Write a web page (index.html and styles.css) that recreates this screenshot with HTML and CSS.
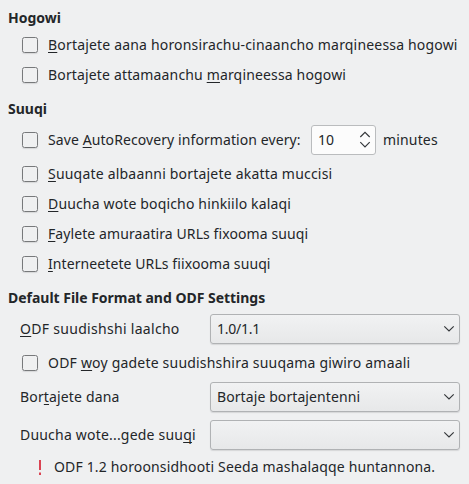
FILE: index.html
```html
<!DOCTYPE html>
<html lang="sid">
<head>
<meta charset="utf-8">
<title>Hogowi</title>
<link rel="stylesheet" href="styles.css">
</head>
<body>
<main class="panel">
  <section class="group">
    <h2>Hogowi</h2>
    <label class="row"><i class="box"></i><span class="text t18"><u>B</u>ortajete aana horonsirachu-cinaancho marqineessa hogowi</span></label>
    <label class="row"><i class="box"></i><span class="text t15">Bortajete attamaanchu <u>m</u>arqineessa hogowi</span></label>
  </section>
  <section class="group">
    <h2>Suuqi</h2>
    <div class="row save">
      <i class="box"></i><span class="text every t10">Save <u>A</u>utoRecovery information every:</span>
      <div class="spin"><span>10</span>
        <svg width="12" height="18" viewBox="0 0 12 18"><path d="M1.3 6 6 1.3 10.7 6M1.3 11.2 6 15.9 10.7 11.2"/></svg>
      </div>
      <span class="text t15">minutes</span>
    </div>
    <label class="row"><i class="box"></i><span class="text t20"><u>S</u>uuqate albaanni bortajete akatta muccisi</span></label>
    <label class="row"><i class="box"></i><span class="text t15"><u>D</u>uucha wote boqicho hinkiilo kalaqi</span></label>
    <label class="row"><i class="box"></i><span class="text t10"><u>F</u>aylete amuraatira URLs fixooma suuqi</span></label>
    <label class="row"><i class="box"></i><span class="text t10"><u>I</u>nterneetete URLs fiixooma suuqi</span></label>
  </section>
  <section class="group">
    <h2 class="tight">Default File Format and ODF Settings</h2>
    <div class="field"><span class="text t30"><u>O</u>DF suudishshi laalcho</span>
      <div class="combo"><span class="version">1.0/1.1</span><svg width="12" height="8" viewBox="0 0 12 8"><path d="M1.3 1.3 6 6 10.7 1.3"/></svg></div></div>
    <label class="row odf"><i class="box"></i><span class="text t20">ODF <u>w</u>oy gadete suudishshira suuqama giwiro amaali</span></label>
    <div class="field"><span class="text t15">Bor<u>t</u>ajete dana</span>
      <div class="combo"><span class="t10">Bortaje bortajentenni</span><svg width="12" height="8" viewBox="0 0 12 8"><path d="M1.3 1.3 6 6 10.7 1.3"/></svg></div></div>
    <div class="field last"><span class="text t20">Duucha wote...gede suu<u>q</u>i</span>
      <div class="combo"><span></span><svg width="12" height="8" viewBox="0 0 12 8"><path d="M1.3 1.3 6 6 10.7 1.3"/></svg></div></div>
    <div class="note"><svg class="bang" width="2" height="15" viewBox="0 0 2 15"><path d="M0 0h2v10H0zM0 12.5h2V15H0z"/></svg><span class="t15">ODF 1.2 horoonsidhooti Seeda mashalaqqe huntannona.</span></div>
  </section>
</main>
</body>
</html>
```
FILE: styles.css
```css
* { box-sizing: border-box; }
body {
  margin: 0;
  background: #eff0f1;
  color: #232629;
  font: 14px/20px "Noto Sans", sans-serif;
}
.panel { padding-top: 6px; width: 469px; height: 484px; overflow: hidden; white-space: nowrap; }
.group + .group { margin-top: 7px; }
h2 { margin: 0; padding-left: 8px; height: 24px; font-size: 14px; line-height: 24px; font-weight: 700; }
.tight { letter-spacing: -0.02px; }
.t10 { letter-spacing: 0.09px; }
.t15 { letter-spacing: 0.155px; }
.t18 { letter-spacing: 0.18px; }
.t20 { letter-spacing: 0.2px; }
.t30 { letter-spacing: 0.3px; }
.version { letter-spacing: -0.25px; }
.row { display: flex; align-items: center; height: 30px; padding-left: 22px; }
.box {
  flex: none;
  width: 16px;
  height: 16px;
  margin-right: 10px;
  border: 1px solid #77797b;
  border-radius: 2.5px;
  box-shadow: 0 1px 1px #d5d6d8;
}
u { text-decoration: underline 1px; text-underline-offset: 2px; text-decoration-skip-ink: none; }
.save { margin: 4px 0; }
.every { width: 263px; }
.spin {
  display: flex;
  align-items: center;
  justify-content: space-between;
  width: 65px;
  height: 30px;
  margin-right: 7px;
  padding: 0 4px 0 6px;
  border: 1px solid #babcbe;
  border-radius: 3px;
  background: #fcfcfc;
}
svg { display: block; flex: none; fill: none; stroke: #34373a; stroke-width: 1.15; }
.field { display: flex; align-items: center; height: 30px; padding-left: 20px; margin: 4px 0; }
.field > .text { width: 190px; }
.combo {
  display: flex;
  align-items: center;
  justify-content: space-between;
  width: 250px;
  height: 30px;
  padding: 0 4px 0 6px;
  border: 1px solid #b0b2b4;
  border-radius: 3px;
  background: linear-gradient(#f1f2f3, #e7e8e9);
  box-shadow: 0 1px 1px #d5d6d8;
}
.field.last { margin: 8px 0 2px; }
.note { display: flex; align-items: center; height: 30px; padding-left: 39px; }
.bang { margin-right: 13px; fill: #da4453; stroke: none; }
```
